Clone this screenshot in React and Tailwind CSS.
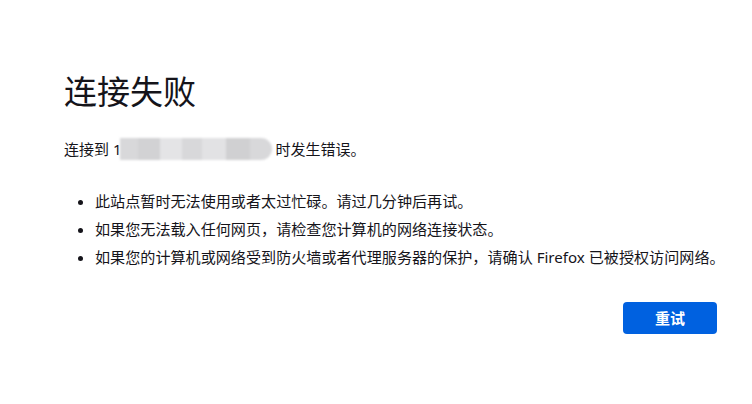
export default function App() {
	const font = { fontFamily: '"Noto Sans", "Noto Sans CJK SC", sans-serif' };
	return (
		<div className="w-[752px] h-[404px] bg-white text-[#15141a] overflow-hidden" style={font}>
			<div className="ml-[64px] w-[653px] pt-[70px]">
				<h1 className="text-[33px] leading-[44px] font-normal text-[#15141a]">连接失败</h1>
				<p className="mt-[24px] text-[15px] leading-[22px] flex items-center">
					<span>连接到 1</span>
					<span className="relative inline-flex h-[22px] w-[152px] -ml-[1px] mr-[3px] rounded-r-full rounded-l-[6px] overflow-hidden blur-[1px]">
						<span className="w-[18px] bg-[#d8d8da]" />
						<span className="w-[22px] bg-[#d2d2d4]" />
						<span className="w-[22px] bg-[#e4e4e6]" />
						<span className="w-[20px] bg-[#d8d8da]" />
						<span className="w-[24px] bg-[#e2e2e4]" />
						<span className="w-[24px] bg-[#d0d0d2]" />
						<span className="w-[22px] bg-[#d8d8da]" />
					</span>
					<span>时发生错误。</span>
				</p>
				<ul className="mt-[27px] ml-[18px] list-disc text-[15.1px] leading-[28px] pl-[13px] whitespace-nowrap marker:text-[#15141a]">
					<li>此站点暂时无法使用或者太过忙碌。请过几分钟后再试。</li>
					<li>如果您无法载入任何网页，请检查您计算机的网络连接状态。</li>
					<li>如果您的计算机或网络受到防火墙或者代理服务器的保护，请确认 Firefox 已被授权访问网络。</li>
				</ul>
				<div className="mt-[31px] flex justify-end">
					<button className="w-[94px] h-[32px] rounded-[4px] bg-[#0061e0] text-white text-[15px] font-bold">
						重试
					</button>
				</div>
			</div>
		</div>
	);
}
